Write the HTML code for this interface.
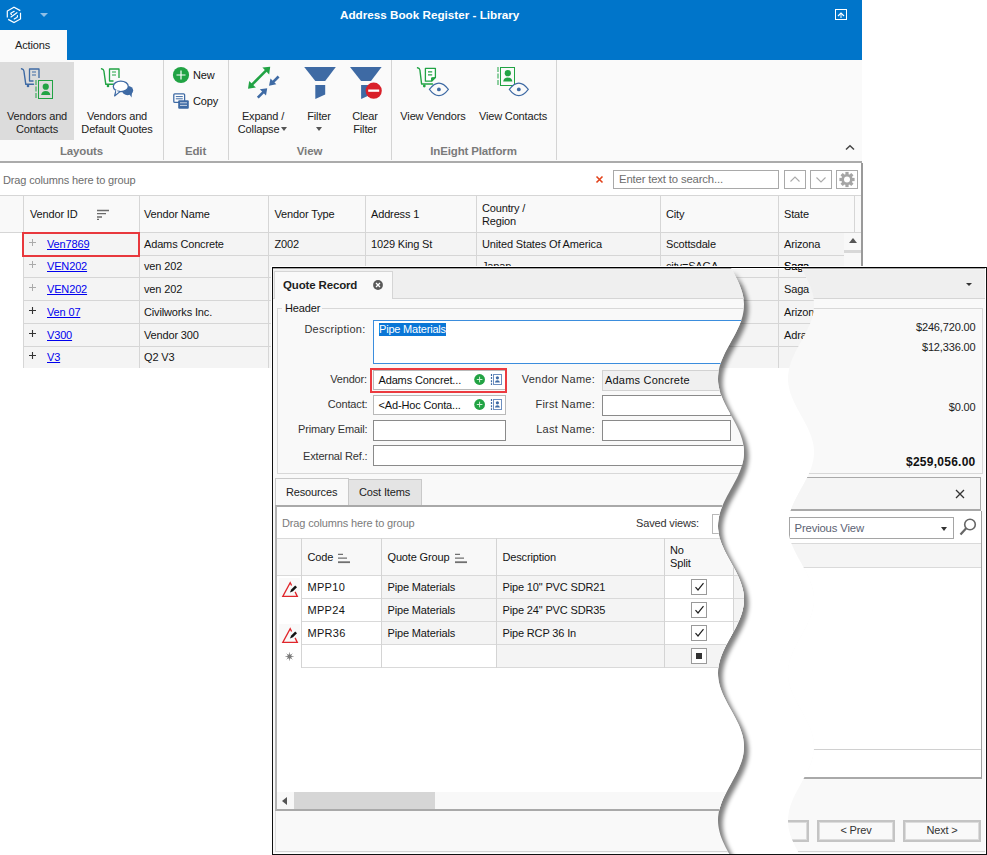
<!DOCTYPE html>
<html><head><meta charset="utf-8">
<style>
*{margin:0;padding:0;box-sizing:border-box}
html,body{width:987px;height:855px;overflow:hidden;background:#fff}
body{position:relative;font-family:"Liberation Sans",sans-serif;font-size:11px;color:#141414;letter-spacing:-0.15px}
.a{position:absolute}
.t{position:absolute;white-space:nowrap;line-height:13px}
#title{left:0;top:0;width:862px;height:60px;background:#0075ca}
#ribbon{left:0;top:60px;width:862px;height:102px;background:#fafafa}
.sep{position:absolute;top:60px;width:1px;height:100px;background:#d4d4d4}
.grp{position:absolute;top:144px;font-weight:bold;color:#7a7a7a;font-size:11.5px;text-align:center;line-height:14px}
.lbl{position:absolute;text-align:center;line-height:13px;color:#222;white-space:nowrap}
.hline{position:absolute;height:1px;background:#d6d6d6}
.vline{position:absolute;width:1px;background:#d6d6d6}
.lnk{color:#0000ee;text-decoration:underline}
.tri{width:0;height:0;border-left:3.5px solid transparent;border-right:3.5px solid transparent;border-top:4px solid #555}
</style></head><body>

<!-- ===== MAIN WINDOW ===== -->
<div class="a" id="title"></div>
<svg class="a" style="left:0;top:0" width="30" height="30" viewBox="0 0 30 30">
 <path d="M20.3,10.6 L14,7.2 L7.3,11 V17.6 M8.2,19.4 L14,22.6 L20.5,19 V12.8" fill="none" stroke="#fff" stroke-width="1.2"/>
 <path d="M14.2,11.3 L10.9,13.1 Q10.4,14 11.4,14.6 M11,16.9 L16.9,12.7 M17.4,15.6 Q17.8,17 16.8,17.6 L14.2,19" fill="none" stroke="#fff" stroke-width="1.2" stroke-linecap="round"/>
</svg>
<div class="a" style="left:40px;top:13px;width:0;height:0;border-left:4px solid transparent;border-right:4px solid transparent;border-top:4px solid #8fbfe6"></div>
<div class="t" style="left:340px;top:8px;color:#fff;font-weight:bold;font-size:11.7px;letter-spacing:0">Address Book Register - Library</div>
<svg class="a" style="left:835px;top:9px" width="12" height="11" viewBox="0 0 12 11"><rect x="0.5" y="0.5" width="11" height="10" fill="none" stroke="#fff"/><path d="M3,7 L6,4 L9,7" fill="none" stroke="#fff" stroke-width="1.2"/><line x1="6" y1="4" x2="6" y2="9" stroke="#fff"/></svg>

<!-- Actions tab -->
<div class="a" style="left:0;top:30px;width:67px;height:32px;background:#fafafa"></div>
<div class="t" style="left:15px;top:39px;color:#222">Actions</div>

<div class="a" id="ribbon"></div>
<div class="a" style="left:0;top:62px;width:74px;height:78px;background:#dcdcdc"></div>
<div class="a" style="left:0;top:161px;width:862px;height:2px;background:#ababab"></div>
<div class="sep" style="left:163px"></div>
<div class="sep" style="left:228px"></div>
<div class="sep" style="left:391px"></div>
<div class="sep" style="left:556px"></div>

<svg class="a" style="left:0;top:0" width="862" height="110" viewBox="0 0 862 110"><path d="M21.5,68.8 Q23.6,69.2 23.9,71 L25.8,84.3 L33.5,84.3" fill="none" stroke="#3e6aa4" stroke-width="1.4" stroke-linecap="round" stroke-linejoin="round"/><circle cx="28" cy="86" r="1.3" fill="#3e6aa4"/><path d="M39,78 L39,69 L29.5,69 L29.5,81 L33.5,81" fill="none" stroke="#3e6aa4" stroke-width="1.3" stroke-linejoin="round"/><path d="M32,72 H36 M32,75 H36" stroke="#3e6aa4" stroke-width="1.2"/><rect x="37" y="79" width="17" height="21" fill="#dcdcdc"/><rect x="38.5" y="80.5" width="14" height="18" fill="none" stroke="#21a344" stroke-width="1"/><path d="M36,80 V99" stroke="#21a344" stroke-width="1" stroke-dasharray="5,1.5"/><circle cx="45.75" cy="86.7" r="3.1" fill="#21a344"/><path d="M41.15,95.0 Q41.75,91.0 45.75,90.9 Q49.75,91.0 50.35,95.0 Z" fill="#21a344"/><path d="M101.5,68.8 Q103.6,69.2 103.9,71 L105.8,84.3 L113.5,84.3" fill="none" stroke="#21a344" stroke-width="1.4" stroke-linecap="round" stroke-linejoin="round"/><circle cx="108" cy="86" r="1.3" fill="#21a344"/><path d="M119,78 L119,69 L109.5,69 L109.5,81 L113.5,81" fill="none" stroke="#21a344" stroke-width="1.3" stroke-linejoin="round"/><path d="M112,72 H116 M112,75 H116" stroke="#21a344" stroke-width="1.2"/><ellipse cx="127.6" cy="90.6" rx="5.6" ry="4.6" fill="#3e6aa4"/><path d="M128.5,93 L131.6,97.6 L132,91" fill="#3e6aa4"/><path d="M116,90.3 L114.6,96 L120,91.6" fill="#fff" stroke="#3e6aa4" stroke-width="1.2" stroke-linejoin="round"/><ellipse cx="120.8" cy="86.4" rx="7.5" ry="5.3" fill="#fff" stroke="#3e6aa4" stroke-width="1.3"/><path d="M115.6,89.8 L116.2,92 L119.2,91.2 Z" fill="#fff"/><circle cx="181" cy="75" r="8.1" fill="#21a344"/><path d="M176.5,75 H185.5 M181,70.5 V79.5" stroke="#fff" stroke-width="1.2"/><rect x="173.8" y="93.8" width="10.8" height="8.6" rx="1" fill="#fff" stroke="#3e6aa4" stroke-width="1.3"/><path d="M175.8,96.6 H182.8 M175.8,98.8 H182.8" stroke="#3e6aa4" stroke-width="1"/><rect x="178.2" y="100.3" width="10.6" height="8.5" rx="1" fill="#3e6aa4"/><path d="M180,102.8 H187 M180,105.4 H187" stroke="#c9d4e4" stroke-width="1"/><path d="M251.5,85.2 L266.5,70.2" stroke="#21a344" stroke-width="2.6"/><polygon points="248,88.8 249.2,81 255.8,87.6" fill="#21a344"/><polygon points="270.2,66.8 262.4,67.6 269.2,74.4" fill="#21a344"/><path d="M278.6,76.5 L272.5,82.6" stroke="#3e6aa4" stroke-width="2.6"/><polygon points="269,85.8 270.5,78.5 276.3,84.3" fill="#3e6aa4"/><path d="M257.8,97.6 L263.8,91.6" stroke="#3e6aa4" stroke-width="2.6"/><polygon points="267.2,88.2 259.8,89.3 266,95.5" fill="#3e6aa4"/><polygon points="304.2,67 335.8,67 325.2,81 315.3,81" fill="#3e6aa4"/><polygon points="315.3,85 325.2,85 325.2,94.4 315.3,98.9" fill="#3e6aa4"/><polygon points="350.0,67 381.6,67 371.0,81 361.1,81" fill="#3e6aa4"/><polygon points="361.1,85 371.0,85 371.0,94.4 361.1,98.9" fill="#3e6aa4"/><circle cx="373.7" cy="90.7" r="8.1" fill="#d9202a"/><rect x="368.2" y="89.5" width="11" height="2.3" fill="#fff"/><path d="M417.5,67.8 Q419.6,68.2 419.9,70 L421.6,84 L432.5,84" fill="none" stroke="#21a344" stroke-width="1.4" stroke-linecap="round" stroke-linejoin="round"/><circle cx="424.3" cy="86" r="1.4" fill="#21a344"/><path d="M425.4,68.4 H435.4 V77.6 L431.6,81.2 H425.4 Z" fill="#fff" stroke="#21a344" stroke-width="1.3" stroke-linejoin="round"/><path d="M431.4,81.2 L431.6,77.8 L435.4,77.6" fill="#21a344" stroke="#21a344" stroke-width="1"/><path d="M428,71.8 H432.2 M428,74.9 H432.2" stroke="#21a344" stroke-width="1.3"/><path d="M429.4,89.4 Q438.9,76.9 448.4,89.4 Q438.9,101.9 429.4,89.4 Z" fill="#fafafa" stroke="#3e6aa4" stroke-width="1.1"/><circle cx="438.9" cy="89.4" r="1.9" fill="#3e6aa4"/><rect x="500.5" y="67.5" width="14" height="18" fill="none" stroke="#21a344" stroke-width="1"/><path d="M498,67 V86" stroke="#21a344" stroke-width="1" stroke-dasharray="5,1.5"/><circle cx="507.8" cy="73.2" r="3.1" fill="#21a344"/><path d="M503.2,81.5 Q503.8,77.5 507.8,77.4 Q511.8,77.5 512.4,81.5 Z" fill="#21a344"/><path d="M509.29999999999995,89.4 Q518.8,76.9 528.3,89.4 Q518.8,101.9 509.29999999999995,89.4 Z" fill="#fafafa" stroke="#3e6aa4" stroke-width="1.1"/><circle cx="518.8" cy="89.4" r="1.9" fill="#3e6aa4"/></svg>
<div class="lbl" style="left:0;top:110px;width:74px">Vendors and<br>Contacts</div>
<div class="lbl" style="left:74px;top:110px;width:86px">Vendors and<br>Default Quotes</div>
<div class="t" style="left:193px;top:69px">New</div>
<div class="t" style="left:193px;top:95px">Copy</div>
<div class="lbl" style="left:228px;top:110px;width:70px">Expand /<br>Collapse &nbsp;&nbsp;</div><div class="a tri" style="left:281px;top:127px"></div>
<div class="lbl" style="left:298px;top:110px;width:42px">Filter</div><div class="a tri" style="left:316px;top:127px"></div>
<div class="lbl" style="left:343px;top:110px;width:44px">Clear<br>Filter</div>
<div class="lbl" style="left:394px;top:110px;width:78px">View Vendors</div>
<div class="lbl" style="left:474px;top:110px;width:78px">View Contacts</div>

<div class="grp" style="left:0;width:163px">Layouts</div>
<div class="grp" style="left:163px;width:65px">Edit</div>
<div class="grp" style="left:228px;width:163px">View</div>
<div class="grp" style="left:391px;width:165px">InEight Platform</div>
<svg class="a" style="left:845px;top:144px" width="10" height="7" viewBox="0 0 10 7"><path d="M1,5.5 L5,1.8 L9,5.5" fill="none" stroke="#444" stroke-width="1.5"/></svg>

<!-- group bar -->
<div class="t" style="left:3px;top:174px;color:#6d6d6d">Drag columns here to group</div>
<svg class="a" style="left:595px;top:175px" width="9" height="9" viewBox="0 0 9 9"><path d="M1.5,1.5 L7.5,7.5 M7.5,1.5 L1.5,7.5" stroke="#e2431c" stroke-width="1.6"/></svg>
<div class="a" style="left:613px;top:170px;width:166px;height:19px;border:1px solid #a9a9a9;background:#fff"></div>
<div class="t" style="left:619px;top:173px;color:#6d6d6d;font-size:11.3px">Enter text to search...</div>
<div class="a" style="left:784px;top:170px;width:22px;height:19px;border:1px solid #a9a9a9;background:#fff"></div>
<div class="a" style="left:810px;top:170px;width:22px;height:19px;border:1px solid #a9a9a9;background:#fff"></div>
<div class="a" style="left:836px;top:170px;width:22px;height:19px;border:1px solid #a9a9a9;background:#fff"></div>
<svg class="a" style="left:784px;top:170px" width="74" height="19" viewBox="0 0 74 19">
<path d="M6.5,11.5 L11,7 L15.5,11.5" fill="none" stroke="#aaa" stroke-width="1.1"/>
<path d="M32.5,7.5 L37,12 L41.5,7.5" fill="none" stroke="#aaa" stroke-width="1.1"/>
<g transform="translate(63,9.5)" fill="#a5a5a5"><circle r="5.6"/>
<g id="teeth"><rect x="-1.6" y="-7.6" width="3.2" height="3"/><rect x="-1.6" y="4.6" width="3.2" height="3"/><rect x="-7.6" y="-1.6" width="3" height="3.2"/><rect x="4.6" y="-1.6" width="3" height="3.2"/></g>
<g transform="rotate(45)"><rect x="-1.6" y="-7.6" width="3.2" height="3"/><rect x="-1.6" y="4.6" width="3.2" height="3"/><rect x="-7.6" y="-1.6" width="3" height="3.2"/><rect x="4.6" y="-1.6" width="3" height="3.2"/></g>
<circle r="3" fill="#fff"/></g></svg>

<!-- grid -->
<div class="a" style="left:0;top:195px;width:862px;height:38px;background:#f9f9f9"></div>
<div class="a" style="left:24px;top:233px;width:838px;height:135px;background:#f4f4f4"></div>
<div class="hline" style="left:0;top:195px;width:862px"></div>
<div class="hline" style="left:0;top:232px;width:862px"></div>
<div class="hline" style="left:24px;top:255px;width:838px"></div>
<div class="hline" style="left:24px;top:277px;width:838px"></div>
<div class="hline" style="left:24px;top:300px;width:838px"></div>
<div class="hline" style="left:24px;top:323px;width:838px"></div>
<div class="hline" style="left:24px;top:346px;width:838px"></div>
<div class="vline" style="left:23px;top:195px;height:173px"></div>
<div class="vline" style="left:139px;top:195px;height:173px"></div>
<div class="vline" style="left:268px;top:195px;height:173px"></div>
<div class="vline" style="left:365px;top:195px;height:173px"></div>
<div class="vline" style="left:476px;top:195px;height:173px"></div>
<div class="vline" style="left:660px;top:195px;height:173px"></div>
<div class="vline" style="left:778px;top:195px;height:173px"></div>
<div class="vline" style="left:854px;top:195px;height:38px"></div>

<div class="t" style="left:30px;top:208px">Vendor ID</div><svg class="a" style="left:96px;top:209px" width="14" height="12" viewBox="0 0 14 12"><path d="M1,1.5 H13 M1,4.7 H10 M1,8 H6 M1,10.4 H3" stroke="#6b6b6b" stroke-width="1.3"/></svg>
<div class="t" style="left:144px;top:208px">Vendor Name</div>
<div class="t" style="left:274.5px;top:208px">Vendor Type</div>
<div class="t" style="left:371px;top:208px">Address 1</div>
<div class="t" style="left:482px;top:202px">Country /<br>Region</div>
<div class="t" style="left:666px;top:208px">City</div>
<div class="t" style="left:784px;top:208px">State</div>

<svg class="a" style="left:28px;top:238px" width="9" height="9" viewBox="0 0 9 9"><path d="M4.5,1 V8 M1,4.5 H8" stroke="#aaa" stroke-width="1"/></svg><div class="t lnk" style="left:47px;top:238px">Ven7869</div>
<svg class="a" style="left:28px;top:260px" width="9" height="9" viewBox="0 0 9 9"><path d="M4.5,1 V8 M1,4.5 H8" stroke="#aaa" stroke-width="1"/></svg><div class="t lnk" style="left:47px;top:260px">VEN202</div>
<svg class="a" style="left:28px;top:283px" width="9" height="9" viewBox="0 0 9 9"><path d="M4.5,1 V8 M1,4.5 H8" stroke="#aaa" stroke-width="1"/></svg><div class="t lnk" style="left:47px;top:283px">VEN202</div>
<svg class="a" style="left:28px;top:306px" width="9" height="9" viewBox="0 0 9 9"><path d="M4.5,1 V8 M1,4.5 H8" stroke="#333" stroke-width="1.1"/></svg><div class="t lnk" style="left:47px;top:306px">Ven 07</div>
<svg class="a" style="left:28px;top:329px" width="9" height="9" viewBox="0 0 9 9"><path d="M4.5,1 V8 M1,4.5 H8" stroke="#333" stroke-width="1.1"/></svg><div class="t lnk" style="left:47px;top:329px">V300</div>
<svg class="a" style="left:28px;top:351px" width="9" height="9" viewBox="0 0 9 9"><path d="M4.5,1 V8 M1,4.5 H8" stroke="#333" stroke-width="1.1"/></svg><div class="t lnk" style="left:47px;top:351px">V3</div>

<div class="t" style="left:144px;top:238px">Adams Concrete</div>
<div class="t" style="left:144px;top:260px">ven 202</div>
<div class="t" style="left:144px;top:283px">ven 202</div>
<div class="t" style="left:144px;top:306px">Civilworks Inc.</div>
<div class="t" style="left:144px;top:329px">Vendor 300</div>
<div class="t" style="left:144px;top:351px">Q2 V3</div>
<div class="t" style="left:274.5px;top:238px">Z002</div>
<div class="t" style="left:371px;top:238px">1029 King St</div>
<div class="t" style="left:482px;top:238px">United States Of America</div>
<div class="t" style="left:666px;top:238px">Scottsdale</div>
<div class="t" style="left:784px;top:238px">Arizona</div>

<div class="t" style="left:482px;top:260px">Japan</div>
<div class="t" style="left:666px;top:260px">city=SAGA</div>
<div class="t" style="left:784px;top:260px">Saga</div>
<div class="t" style="left:784px;top:283px">Saga</div>
<div class="t" style="left:784px;top:306px">Arizona</div>
<div class="t" style="left:784px;top:329px">Adrar</div>
<div class="a" style="left:844px;top:233px;width:18px;height:135px;background:#f8f8f8"></div>
<div class="a" style="left:849px;top:238px;width:0;height:0;border-left:4px solid transparent;border-right:4px solid transparent;border-bottom:5px solid #555"></div>
<div class="a" style="left:844px;top:250px;width:18px;height:3px;background:#d8d8d8"></div>
<div class="a" style="left:861px;top:163px;width:2px;height:105px;background:#9a9a9a"></div>
<div class="a" style="left:22px;top:232px;width:118px;height:25px;border:2px solid #e8383d"></div>

<svg class="a" style="left:0;top:0" width="987" height="855" viewBox="0 0 987 855">
<defs><filter id="sh" x="-10%" y="-10%" width="120%" height="120%"><feGaussianBlur stdDeviation="2.2"/></filter>
<clipPath id="shc"><rect x="600" y="268" width="300" height="586"/></clipPath><linearGradient id="shg" x1="0" y1="0" x2="0" y2="1"><stop offset="0" stop-color="#fff" stop-opacity="0"/><stop offset="1" stop-color="#fff" stop-opacity="1"/></linearGradient><mask id="shm" maskUnits="userSpaceOnUse" x="0" y="0" width="987" height="855"><rect x="600" y="268" width="300" height="18" fill="url(#shg)"/><rect x="600" y="286" width="300" height="570" fill="#fff"/></mask></defs>
<g clip-path="url(#shc)" mask="url(#shm)"><path d="M272.0,268.0 L731.0,268.0 L732.7,271.0 L734.3,274.0 L735.9,277.0 L737.4,280.0 L738.8,283.0 L740.0,286.0 L741.1,289.0 L742.1,292.0 L742.9,295.0 L743.5,298.0 L743.8,301.0 L744.0,304.0 L743.9,307.0 L743.7,310.0 L743.2,313.0 L742.6,316.0 L741.7,319.0 L740.7,322.0 L739.5,325.0 L738.1,328.0 L736.7,331.0 L735.2,334.0 L733.6,337.0 L731.9,340.0 L730.3,343.0 L728.6,346.0 L727.0,349.0 L725.4,352.0 L724.0,355.0 L722.7,358.0 L721.4,361.0 L720.4,364.0 L719.5,367.0 L718.8,370.0 L718.4,373.0 L718.1,376.0 L718.0,379.0 L718.1,382.0 L718.5,385.0 L719.1,388.0 L719.8,391.0 L720.7,394.0 L721.9,397.0 L723.1,400.0 L724.5,403.0 L726.0,406.0 L727.5,409.0 L729.2,412.0 L730.8,415.0 L732.5,418.0 L734.1,421.0 L735.7,424.0 L737.2,427.0 L738.6,430.0 L739.9,433.0 L741.0,436.0 L742.0,439.0 L742.8,442.0 L743.4,445.0 L743.8,448.0 L744.0,451.0 L744.0,454.0 L743.7,457.0 L743.3,460.0 L742.6,463.0 L741.8,466.0 L740.8,469.0 L739.6,472.0 L738.3,475.0 L736.9,478.0 L735.3,481.0 L733.7,484.0 L732.1,487.0 L730.4,490.0 L728.8,493.0 L727.1,496.0 L725.6,499.0 L724.1,502.0 L722.8,505.0 L721.6,508.0 L720.5,511.0 L719.6,514.0 L718.9,517.0 L718.4,520.0 L718.1,523.0 L718.0,526.0 L718.1,529.0 L718.5,532.0 L719.0,535.0 L719.7,538.0 L720.6,541.0 L721.7,544.0 L723.0,547.0 L724.3,550.0 L725.8,553.0 L727.4,556.0 L729.0,559.0 L730.7,562.0 L732.3,565.0 L734.0,568.0 L735.6,571.0 L737.1,574.0 L738.5,577.0 L739.8,580.0 L740.9,583.0 L741.9,586.0 L742.7,589.0 L743.4,592.0 L743.8,595.0 L744.0,598.0 L744.0,601.0 L743.8,604.0 L743.3,607.0 L742.7,610.0 L741.9,613.0 L740.9,616.0 L739.7,619.0 L738.4,622.0 L737.0,625.0 L735.5,628.0 L733.9,631.0 L732.2,634.0 L730.6,637.0 L728.9,640.0 L727.3,643.0 L725.7,646.0 L724.3,649.0 L722.9,652.0 L721.7,655.0 L720.6,658.0 L719.7,661.0 L719.0,664.0 L718.4,667.0 L718.1,670.0 L718.0,673.0 L718.1,676.0 L718.4,679.0 L718.9,682.0 L719.6,685.0 L720.5,688.0 L721.6,691.0 L722.8,694.0 L724.2,697.0 L725.7,700.0 L727.2,703.0 L728.8,706.0 L730.5,709.0 L732.2,712.0 L733.8,715.0 L735.4,718.0 L736.9,721.0 L738.4,724.0 L739.7,727.0 L740.8,730.0 L741.8,733.0 L742.7,736.0 L743.3,739.0 L743.7,742.0 L744.0,745.0 L744.0,748.0 L743.8,751.0 L743.4,754.0 L742.8,757.0 L742.0,760.0 L741.0,763.0 L739.8,766.0 L738.6,769.0 L737.1,772.0 L735.6,775.0 L734.0,778.0 L732.4,781.0 L730.8,784.0 L729.1,787.0 L727.5,790.0 L725.9,793.0 L724.4,796.0 L723.0,799.0 L721.8,802.0 L720.7,805.0 L719.8,808.0 L719.0,811.0 L718.5,814.0 L718.1,817.0 L718.0,820.0 L718.1,823.0 L718.4,826.0 L718.9,829.0 L719.6,832.0 L720.4,835.0 L721.5,838.0 L722.7,841.0 L724.1,844.0 L725.5,847.0 L727.1,850.0 L728.7,853.0 L730.3,856.0 L272.0,856.0 Z" transform="translate(4.5,4)" fill="#000" opacity="0.5" filter="url(#sh)"/></g></svg>
<div class="a" style="left:273px;top:268px;width:713px;height:1px;background:#fff"></div>
<div class="t" style="left:784px;top:260px">Saga</div>
<div class="a" style="left:0;top:0;width:987px;height:855px;clip-path:polygon(271.0px 266.0px,731.0px 266.0px,731.0px 268.0px,732.7px 271.0px,734.3px 274.0px,735.9px 277.0px,737.4px 280.0px,738.8px 283.0px,740.0px 286.0px,741.1px 289.0px,742.1px 292.0px,742.9px 295.0px,743.5px 298.0px,743.8px 301.0px,744.0px 304.0px,743.9px 307.0px,743.7px 310.0px,743.2px 313.0px,742.6px 316.0px,741.7px 319.0px,740.7px 322.0px,739.5px 325.0px,738.1px 328.0px,736.7px 331.0px,735.2px 334.0px,733.6px 337.0px,731.9px 340.0px,730.3px 343.0px,728.6px 346.0px,727.0px 349.0px,725.4px 352.0px,724.0px 355.0px,722.7px 358.0px,721.4px 361.0px,720.4px 364.0px,719.5px 367.0px,718.8px 370.0px,718.4px 373.0px,718.1px 376.0px,718.0px 379.0px,718.1px 382.0px,718.5px 385.0px,719.1px 388.0px,719.8px 391.0px,720.7px 394.0px,721.9px 397.0px,723.1px 400.0px,724.5px 403.0px,726.0px 406.0px,727.5px 409.0px,729.2px 412.0px,730.8px 415.0px,732.5px 418.0px,734.1px 421.0px,735.7px 424.0px,737.2px 427.0px,738.6px 430.0px,739.9px 433.0px,741.0px 436.0px,742.0px 439.0px,742.8px 442.0px,743.4px 445.0px,743.8px 448.0px,744.0px 451.0px,744.0px 454.0px,743.7px 457.0px,743.3px 460.0px,742.6px 463.0px,741.8px 466.0px,740.8px 469.0px,739.6px 472.0px,738.3px 475.0px,736.9px 478.0px,735.3px 481.0px,733.7px 484.0px,732.1px 487.0px,730.4px 490.0px,728.8px 493.0px,727.1px 496.0px,725.6px 499.0px,724.1px 502.0px,722.8px 505.0px,721.6px 508.0px,720.5px 511.0px,719.6px 514.0px,718.9px 517.0px,718.4px 520.0px,718.1px 523.0px,718.0px 526.0px,718.1px 529.0px,718.5px 532.0px,719.0px 535.0px,719.7px 538.0px,720.6px 541.0px,721.7px 544.0px,723.0px 547.0px,724.3px 550.0px,725.8px 553.0px,727.4px 556.0px,729.0px 559.0px,730.7px 562.0px,732.3px 565.0px,734.0px 568.0px,735.6px 571.0px,737.1px 574.0px,738.5px 577.0px,739.8px 580.0px,740.9px 583.0px,741.9px 586.0px,742.7px 589.0px,743.4px 592.0px,743.8px 595.0px,744.0px 598.0px,744.0px 601.0px,743.8px 604.0px,743.3px 607.0px,742.7px 610.0px,741.9px 613.0px,740.9px 616.0px,739.7px 619.0px,738.4px 622.0px,737.0px 625.0px,735.5px 628.0px,733.9px 631.0px,732.2px 634.0px,730.6px 637.0px,728.9px 640.0px,727.3px 643.0px,725.7px 646.0px,724.3px 649.0px,722.9px 652.0px,721.7px 655.0px,720.6px 658.0px,719.7px 661.0px,719.0px 664.0px,718.4px 667.0px,718.1px 670.0px,718.0px 673.0px,718.1px 676.0px,718.4px 679.0px,718.9px 682.0px,719.6px 685.0px,720.5px 688.0px,721.6px 691.0px,722.8px 694.0px,724.2px 697.0px,725.7px 700.0px,727.2px 703.0px,728.8px 706.0px,730.5px 709.0px,732.2px 712.0px,733.8px 715.0px,735.4px 718.0px,736.9px 721.0px,738.4px 724.0px,739.7px 727.0px,740.8px 730.0px,741.8px 733.0px,742.7px 736.0px,743.3px 739.0px,743.7px 742.0px,744.0px 745.0px,744.0px 748.0px,743.8px 751.0px,743.4px 754.0px,742.8px 757.0px,742.0px 760.0px,741.0px 763.0px,739.8px 766.0px,738.6px 769.0px,737.1px 772.0px,735.6px 775.0px,734.0px 778.0px,732.4px 781.0px,730.8px 784.0px,729.1px 787.0px,727.5px 790.0px,725.9px 793.0px,724.4px 796.0px,723.0px 799.0px,721.8px 802.0px,720.7px 805.0px,719.8px 808.0px,719.0px 811.0px,718.5px 814.0px,718.1px 817.0px,718.0px 820.0px,718.1px 823.0px,718.4px 826.0px,718.9px 829.0px,719.6px 832.0px,720.4px 835.0px,721.5px 838.0px,722.7px 841.0px,724.1px 844.0px,725.5px 847.0px,727.1px 850.0px,728.7px 853.0px,730.3px 856.0px,271.0px 856.0px)"><div class="a" style="left:272px;top:267px;width:715px;height:588px;background:#f9f9f9"></div><div class="a" style="left:273px;top:268px;width:714px;height:1px;background:#a6a6a6"></div><div class="a" style="left:273px;top:269px;width:714px;height:1px;background:#f4f4f4"></div><div class="a" style="left:273px;top:270px;width:714px;height:29px;background:#efefef;border-bottom:1px solid #d5d5d5"></div><div class="a" style="left:274px;top:271px;width:119px;height:28px;background:#f9f9f9;border:1px solid #d5d5d5;border-bottom:none"></div><div class="t" style="left:283px;top:278.5px;font-weight:bold;font-size:11.5px;color:#1e1e1e">Quote Record</div><svg class="a" style="left:372px;top:279px" width="12" height="12" viewBox="0 0 12 12"><circle cx="6" cy="6" r="4.9" fill="#595959"/><path d="M4,4 L8,8 M8,4 L4,8" stroke="#fff" stroke-width="1.3"/></svg><div class="a" style="left:277px;top:308px;width:710px;height:166px;border:1px solid #d8d8d8;border-right:none"></div><div class="a" style="left:282px;top:303px;width:40px;height:12px;background:#f9f9f9"></div><div class="t" style="left:285px;top:301.5px;">Header</div><div class="t" style="right:621.5px;top:322.5px;color:#333;letter-spacing:0.25px">Description:</div><div class="a" style="left:373px;top:320px;width:614px;height:44px;background:#fff;border:1px solid #3b8ddd"></div><div class="a" style="left:379px;top:323px;width:67px;height:13px;background:#0a76d6"></div><div class="t" style="left:379px;top:323.0px;color:#fff;letter-spacing:-0.2px">Pipe Materials</div><div class="t" style="right:620px;top:372.5px;color:#333">Vendor:</div><div class="t" style="right:619.5px;top:398.0px;color:#333">Contact:</div><div class="t" style="right:619.5px;top:422.5px;color:#333">Primary Email:</div><div class="t" style="right:619.5px;top:450.0px;color:#333">External Ref.:</div><div class="a" style="left:373px;top:370px;width:133px;height:20px;background:#fff;border:1px solid #b9b9b9"></div><div class="a" style="left:373px;top:395px;width:133px;height:20px;background:#fff;border:1px solid #b9b9b9"></div><div class="a" style="left:373px;top:420px;width:133px;height:21px;background:#fff;border:1px solid #8a8a8a"></div><div class="a" style="left:373px;top:445px;width:614px;height:21px;background:#fff;border:1px solid #8a8a8a"></div><div class="a" style="left:370px;top:368px;width:137px;height:25px;border:2px solid #ec3b40"></div><div class="t" style="left:378.5px;top:373.5px;color:#111">Adams Concret...</div><div class="t" style="left:378.5px;top:398.5px;color:#111">&lt;Ad-Hoc Conta...</div><svg class="a" style="left:474px;top:374.0px" width="11" height="11" viewBox="0 0 11 11"><circle cx="5.6" cy="5.5" r="5.4" fill="#22a344"/><path d="M2.8,5.5 H8.4 M5.6,2.7 V8.3" stroke="#d8f2dc" stroke-width="1"/></svg><svg class="a" style="left:490px;top:373.0px" width="13" height="13" viewBox="0 0 13 13"><path d="M1.5,1 V12" stroke="#3e6aa4" stroke-width="1.2" stroke-dasharray="2,1.1"/><rect x="3.5" y="1.5" width="8" height="10" fill="#fff" stroke="#6d8fc0" stroke-width="1"/><circle cx="7.4" cy="4.8" r="1.6" fill="#3e6aa4"/><path d="M4.9,9.6 Q5.2,7.2 7.4,7.2 Q9.6,7.2 9.9,9.6 Z" fill="#3e6aa4"/></svg><svg class="a" style="left:474px;top:399.0px" width="11" height="11" viewBox="0 0 11 11"><circle cx="5.6" cy="5.5" r="5.4" fill="#22a344"/><path d="M2.8,5.5 H8.4 M5.6,2.7 V8.3" stroke="#d8f2dc" stroke-width="1"/></svg><svg class="a" style="left:490px;top:398.0px" width="13" height="13" viewBox="0 0 13 13"><path d="M1.5,1 V12" stroke="#3e6aa4" stroke-width="1.2" stroke-dasharray="2,1.1"/><rect x="3.5" y="1.5" width="8" height="10" fill="#fff" stroke="#6d8fc0" stroke-width="1"/><circle cx="7.4" cy="4.8" r="1.6" fill="#3e6aa4"/><path d="M4.9,9.6 Q5.2,7.2 7.4,7.2 Q9.6,7.2 9.9,9.6 Z" fill="#3e6aa4"/></svg><div class="t" style="right:392px;top:372.5px;color:#333;letter-spacing:0.25px">Vendor Name:</div><div class="t" style="right:392px;top:398.0px;color:#333;letter-spacing:0.25px">First Name:</div><div class="t" style="right:392px;top:422.5px;color:#333;letter-spacing:0.25px">Last Name:</div><div class="a" style="left:602px;top:370px;width:385px;height:21px;background:#f0f0f0;border:1px solid #d2d2d2"></div><div class="t" style="left:605px;top:374.0px;color:#111;letter-spacing:0.2px">Adams Concrete</div><div class="a" style="left:602px;top:395px;width:129px;height:21px;background:#fff;border:1px solid #8a8a8a"></div><div class="a" style="left:602px;top:420px;width:129px;height:21px;background:#fff;border:1px solid #8a8a8a"></div><div class="a" style="left:275px;top:478px;width:74px;height:28px;background:#f9f9f9;border:1px solid #c9c9c9;border-bottom:none"></div><div class="a" style="left:348px;top:479px;width:74px;height:27px;background:#e4e4e4;border:1px solid #c9c9c9;border-bottom:none"></div><div class="t" style="left:286px;top:485.5px;color:#222">Resources</div><div class="t" style="left:359px;top:485.5px;color:#222">Cost Items</div><div class="a" style="left:275px;top:505px;width:712px;height:306px;background:#fff;border-top:2px solid #a9a9a9;border-left:2px solid #b3b3b3;border-bottom:2px solid #a9a9a9"></div><div class="t" style="left:282px;top:516.5px;color:#7b7b7b">Drag columns here to group</div><div class="t" style="right:288px;top:516.5px;color:#333">Saved views:</div><div class="a" style="left:712px;top:514px;width:60px;height:20px;background:#fff;border:1px solid #b9b9b9"></div><div class="a" style="left:277px;top:538px;width:710px;height:38px;background:#f8f8f8;border-top:1px solid #d9d9d9;border-bottom:1px solid #d9d9d9"></div><div class="a" style="left:302px;top:576px;width:80px;height:23px;background:#fff"></div><div class="a" style="left:382px;top:576px;width:115px;height:23px;background:#f4f4f4"></div><div class="a" style="left:497px;top:576px;width:490px;height:23px;background:#f4f4f4"></div><div class="a" style="left:665px;top:576px;width:68px;height:22px;background:#fff"></div><div class="a" style="left:302px;top:599px;width:80px;height:23px;background:#fff"></div><div class="a" style="left:382px;top:599px;width:115px;height:23px;background:#f4f4f4"></div><div class="a" style="left:497px;top:599px;width:490px;height:23px;background:#f4f4f4"></div><div class="a" style="left:665px;top:599px;width:68px;height:22px;background:#fff"></div><div class="a" style="left:302px;top:622px;width:80px;height:23px;background:#fff"></div><div class="a" style="left:382px;top:622px;width:115px;height:23px;background:#f4f4f4"></div><div class="a" style="left:497px;top:622px;width:490px;height:23px;background:#f4f4f4"></div><div class="a" style="left:665px;top:622px;width:68px;height:22px;background:#fff"></div><div class="a" style="left:302px;top:645px;width:80px;height:23px;background:#fff"></div><div class="a" style="left:382px;top:645px;width:115px;height:23px;background:#fff"></div><div class="a" style="left:497px;top:645px;width:490px;height:23px;background:#f4f4f4"></div><div class="a" style="left:302px;top:598px;width:685px;height:1px;background:#d9d9d9"></div><div class="a" style="left:302px;top:621px;width:685px;height:1px;background:#d9d9d9"></div><div class="a" style="left:302px;top:644px;width:685px;height:1px;background:#d9d9d9"></div><div class="a" style="left:302px;top:667px;width:685px;height:1px;background:#d9d9d9"></div><div class="a" style="left:301px;top:538px;width:1px;height:130px;background:#d4d4d4"></div><div class="a" style="left:381px;top:538px;width:1px;height:130px;background:#d4d4d4"></div><div class="a" style="left:496px;top:538px;width:1px;height:130px;background:#d4d4d4"></div><div class="a" style="left:664px;top:538px;width:1px;height:130px;background:#d4d4d4"></div><div class="a" style="left:733px;top:538px;width:1px;height:130px;background:#d4d4d4"></div><div class="t" style="left:307.5px;top:550.5px;">Code</div><div class="t" style="left:387.5px;top:550.5px;">Quote Group</div><div class="t" style="left:502.5px;top:550.5px;">Description</div><div class="t" style="left:670px;top:544.0px;">No</div><div class="t" style="left:670px;top:557.0px;">Split</div><svg class="a" style="left:338px;top:552px" width="13" height="12" viewBox="0 0 13 12"><path d="M0,2.3 H5 M0,6.2 H9" stroke="#707070" stroke-width="1.3"/><path d="M0,10.2 H12" stroke="#707070" stroke-width="1.8"/></svg><svg class="a" style="left:455px;top:552px" width="13" height="12" viewBox="0 0 13 12"><path d="M0,2.3 H5 M0,6.2 H9" stroke="#707070" stroke-width="1.3"/><path d="M0,10.2 H12" stroke="#707070" stroke-width="1.8"/></svg><div class="t" style="left:307.5px;top:580.5px;letter-spacing:0.3px">MPP10</div><div class="t" style="left:387.5px;top:580.5px;">Pipe Materials</div><div class="t" style="left:502.5px;top:580.5px;">Pipe 10&quot; PVC SDR21</div><div class="a" style="left:691px;top:579px;width:16px;height:16px;background:#fff;border:1px solid #9a9a9a"></div><svg class="a" style="left:694px;top:582px" width="11" height="10" viewBox="0 0 11 10"><path d="M1.5,5.2 L4,8 L9.5,1.2" fill="none" stroke="#222" stroke-width="1.2"/></svg><div class="t" style="left:307.5px;top:603.5px;letter-spacing:0.3px">MPP24</div><div class="t" style="left:387.5px;top:603.5px;">Pipe Materials</div><div class="t" style="left:502.5px;top:603.5px;">Pipe 24&quot; PVC SDR35</div><div class="a" style="left:691px;top:602px;width:16px;height:16px;background:#fff;border:1px solid #9a9a9a"></div><svg class="a" style="left:694px;top:605px" width="11" height="10" viewBox="0 0 11 10"><path d="M1.5,5.2 L4,8 L9.5,1.2" fill="none" stroke="#222" stroke-width="1.2"/></svg><div class="t" style="left:307.5px;top:626.5px;letter-spacing:0.3px">MPR36</div><div class="t" style="left:387.5px;top:626.5px;">Pipe Materials</div><div class="t" style="left:502.5px;top:626.5px;">Pipe RCP 36 In</div><div class="a" style="left:691px;top:625px;width:16px;height:16px;background:#fff;border:1px solid #9a9a9a"></div><svg class="a" style="left:694px;top:628px" width="11" height="10" viewBox="0 0 11 10"><path d="M1.5,5.2 L4,8 L9.5,1.2" fill="none" stroke="#222" stroke-width="1.2"/></svg><div class="a" style="left:691px;top:648px;width:16px;height:16px;background:#fff;border:1px solid #9a9a9a"></div><div class="a" style="left:696px;top:653px;width:6px;height:6px;background:#333"></div><div class="a" style="left:279px;top:578px;width:21px;height:19px;background:#f9f9f9"></div><svg class="a" style="left:276px;top:576px" width="30" height="30" viewBox="0 0 30 30"><path d="M15.6,9.6 L14.2,6.6 L6.8,20.4 H21.3 L19.1,15.9" fill="none" stroke="#e0262b" stroke-width="1.3" stroke-linejoin="miter"/><path d="M13.9,16.6 L15.2,13.4 L19.2,9.4 L21,11.2 L17,15.2 Z" fill="#111"/></svg><div class="a" style="left:279px;top:624px;width:21px;height:19px;background:#f9f9f9"></div><svg class="a" style="left:276px;top:622px" width="30" height="30" viewBox="0 0 30 30"><path d="M15.6,9.6 L14.2,6.6 L6.8,20.4 H21.3 L19.1,15.9" fill="none" stroke="#e0262b" stroke-width="1.3" stroke-linejoin="miter"/><path d="M13.9,16.6 L15.2,13.4 L19.2,9.4 L21,11.2 L17,15.2 Z" fill="#111"/></svg><svg class="a" style="left:284.7px;top:651.6px" width="9" height="9" viewBox="0 0 9 9"><path d="M4.5,0.5 V8.5 M0.5,4.5 H8.5 M1.7,1.7 L7.3,7.3 M7.3,1.7 L1.7,7.3" stroke="#999" stroke-width="0.9"/><circle cx="4.5" cy="4.5" r="2.2" fill="#7a7a7a"/></svg><div class="a" style="left:277px;top:792px;width:710px;height:17px;background:#f8f8f8"></div><div class="a" style="left:294px;top:792px;width:141px;height:17px;background:#d6d6d6"></div><div class="a" style="left:282px;top:797px;width:0px;height:0px;border-top:4px solid transparent;border-bottom:4px solid transparent;border-right:5px solid #555"></div><div class="a" style="left:275px;top:811px;width:712px;height:41px;border-left:1px solid #dcdcdc;border-bottom:1px solid #d5d5d5"></div><div class="a" style="left:273px;top:853px;width:714px;height:1px;background:#fff"></div></div>
<div class="a" style="left:0;top:0;width:987px;height:855px;clip-path:polygon(801.0px 268.0px,802.7px 271.0px,804.3px 274.0px,805.9px 277.0px,807.4px 280.0px,808.8px 283.0px,810.0px 286.0px,811.1px 289.0px,812.1px 292.0px,812.9px 295.0px,813.5px 298.0px,813.8px 301.0px,814.0px 304.0px,813.9px 307.0px,813.7px 310.0px,813.2px 313.0px,812.6px 316.0px,811.7px 319.0px,810.7px 322.0px,809.5px 325.0px,808.1px 328.0px,806.7px 331.0px,805.2px 334.0px,803.6px 337.0px,801.9px 340.0px,800.3px 343.0px,798.6px 346.0px,797.0px 349.0px,795.4px 352.0px,794.0px 355.0px,792.7px 358.0px,791.4px 361.0px,790.4px 364.0px,789.5px 367.0px,788.8px 370.0px,788.4px 373.0px,788.1px 376.0px,788.0px 379.0px,788.1px 382.0px,788.5px 385.0px,789.1px 388.0px,789.8px 391.0px,790.7px 394.0px,791.9px 397.0px,793.1px 400.0px,794.5px 403.0px,796.0px 406.0px,797.5px 409.0px,799.2px 412.0px,800.8px 415.0px,802.5px 418.0px,804.1px 421.0px,805.7px 424.0px,807.2px 427.0px,808.6px 430.0px,809.9px 433.0px,811.0px 436.0px,812.0px 439.0px,812.8px 442.0px,813.4px 445.0px,813.8px 448.0px,814.0px 451.0px,814.0px 454.0px,813.7px 457.0px,813.3px 460.0px,812.6px 463.0px,811.8px 466.0px,810.8px 469.0px,809.6px 472.0px,808.3px 475.0px,806.9px 478.0px,805.3px 481.0px,803.7px 484.0px,802.1px 487.0px,800.4px 490.0px,798.8px 493.0px,797.1px 496.0px,795.6px 499.0px,794.1px 502.0px,792.8px 505.0px,791.6px 508.0px,790.5px 511.0px,789.6px 514.0px,788.9px 517.0px,788.4px 520.0px,788.1px 523.0px,788.0px 526.0px,788.1px 529.0px,788.5px 532.0px,789.0px 535.0px,789.7px 538.0px,790.6px 541.0px,791.7px 544.0px,793.0px 547.0px,794.3px 550.0px,795.8px 553.0px,797.4px 556.0px,799.0px 559.0px,800.7px 562.0px,802.3px 565.0px,804.0px 568.0px,805.6px 571.0px,807.1px 574.0px,808.5px 577.0px,809.8px 580.0px,810.9px 583.0px,811.9px 586.0px,812.7px 589.0px,813.4px 592.0px,813.8px 595.0px,814.0px 598.0px,814.0px 601.0px,813.8px 604.0px,813.3px 607.0px,812.7px 610.0px,811.9px 613.0px,810.9px 616.0px,809.7px 619.0px,808.4px 622.0px,807.0px 625.0px,805.5px 628.0px,803.9px 631.0px,802.2px 634.0px,800.6px 637.0px,798.9px 640.0px,797.3px 643.0px,795.7px 646.0px,794.3px 649.0px,792.9px 652.0px,791.7px 655.0px,790.6px 658.0px,789.7px 661.0px,789.0px 664.0px,788.4px 667.0px,788.1px 670.0px,788.0px 673.0px,788.1px 676.0px,788.4px 679.0px,788.9px 682.0px,789.6px 685.0px,790.5px 688.0px,791.6px 691.0px,792.8px 694.0px,794.2px 697.0px,795.7px 700.0px,797.2px 703.0px,798.8px 706.0px,800.5px 709.0px,802.2px 712.0px,803.8px 715.0px,805.4px 718.0px,806.9px 721.0px,808.4px 724.0px,809.7px 727.0px,810.8px 730.0px,811.8px 733.0px,812.7px 736.0px,813.3px 739.0px,813.7px 742.0px,814.0px 745.0px,814.0px 748.0px,813.8px 751.0px,813.4px 754.0px,812.8px 757.0px,812.0px 760.0px,811.0px 763.0px,809.8px 766.0px,808.6px 769.0px,807.1px 772.0px,805.6px 775.0px,804.0px 778.0px,802.4px 781.0px,800.8px 784.0px,799.1px 787.0px,797.5px 790.0px,795.9px 793.0px,794.4px 796.0px,793.0px 799.0px,791.8px 802.0px,790.7px 805.0px,789.8px 808.0px,789.0px 811.0px,788.5px 814.0px,788.1px 817.0px,788.0px 820.0px,788.1px 823.0px,788.4px 826.0px,788.9px 829.0px,789.6px 832.0px,790.4px 835.0px,791.5px 838.0px,792.7px 841.0px,794.1px 844.0px,795.5px 847.0px,797.1px 850.0px,798.7px 853.0px,800.3px 856.0px,988.0px 856.0px,988.0px 266.0px,801.0px 266.0px)"><div class="a" style="left:700px;top:267px;width:287px;height:588px;background:#f9f9f9"></div><div class="a" style="left:700px;top:268px;width:285px;height:1px;background:#a6a6a6"></div><div class="a" style="left:700px;top:269px;width:285px;height:1px;background:#f4f4f4"></div><div class="a" style="left:700px;top:270px;width:285px;height:29px;background:#efefef;border-bottom:1px solid #d5d5d5"></div><div class="a" style="left:985px;top:268px;width:1px;height:586px;background:#fff"></div><div class="a" style="left:966px;top:283px;width:0px;height:0px;border-left:3px solid transparent;border-right:3px solid transparent;border-top:3px solid #333"></div><div class="a" style="left:700px;top:308px;width:283px;height:166px;border:1px solid #d8d8d8;border-left:none"></div><div class="t" style="right:11.5px;top:321.0px;color:#222;letter-spacing:-0.15px">$246,720.00</div><div class="t" style="right:11.5px;top:341.0px;color:#222;letter-spacing:-0.15px">$12,336.00</div><div class="t" style="right:11.5px;top:400.5px;color:#222;letter-spacing:-0.15px">$0.00</div><div class="t" style="right:11.5px;top:455.5px;color:#111;font-weight:bold;font-size:12px;letter-spacing:0.25px">$259,056.00</div><div class="a" style="left:700px;top:477px;width:281px;height:34px;background:#f5f5f5;border-top:1px solid #a9a9a9;border-right:1px solid #a9a9a9;border-bottom:2px solid #a9a9a9"></div><svg class="a" style="left:955px;top:489px" width="10" height="10" viewBox="0 0 10 10"><path d="M1,1 L9,9 M9,1 L1,9" stroke="#333" stroke-width="1.3"/></svg><div class="a" style="left:700px;top:511px;width:282px;height:268px;background:#fff;border-right:1px solid #a0a0a0;border-bottom:2px solid #a9a9a9"></div><div class="a" style="left:789px;top:517px;width:165px;height:22px;background:#fff;border:1px solid #a5a5a5"></div><div class="t" style="left:794.5px;top:521.5px;color:#5c6273;font-size:11.3px">Previous View</div><div class="a" style="left:941px;top:527px;width:0px;height:0px;border-left:3.5px solid transparent;border-right:3.5px solid transparent;border-top:4px solid #333"></div><svg class="a" style="left:958px;top:515px" width="20" height="22" viewBox="0 0 20 22"><circle cx="12" cy="9.5" r="5.3" fill="none" stroke="#666" stroke-width="1.6"/><path d="M8.2,13.3 L2.5,19.5" stroke="#666" stroke-width="2.2"/></svg><div class="a" style="left:700px;top:543px;width:281px;height:25px;background:#f5f5f5;border-top:1px solid #dadada;border-bottom:1px solid #dadada"></div><div class="a" style="left:700px;top:749px;width:281px;height:1px;background:#d0d0d0"></div><div class="a" style="left:731px;top:820px;width:78px;height:22px;background:#f9f9f9;border:2px solid #c4c4c4;box-shadow:inset 0 0 0 1px #dcdcdc"></div><div class="a" style="left:817px;top:820px;width:78px;height:22px;background:#f9f9f9;border:2px solid #c4c4c4;box-shadow:inset 0 0 0 1px #dcdcdc"></div><div class="t" style="left:817px;top:824px;width:78px;text-align:center;color:#333">&lt; Prev</div><div class="a" style="left:903px;top:820px;width:78px;height:22px;background:#f9f9f9;border:2px solid #c4c4c4;box-shadow:inset 0 0 0 1px #dcdcdc"></div><div class="t" style="left:903px;top:824px;width:78px;text-align:center;color:#333">Next &gt;</div><div class="a" style="left:700px;top:851px;width:285px;height:1px;background:#d5d5d5"></div><div class="a" style="left:700px;top:853px;width:285px;height:1px;background:#fff"></div></div>
<div class="a" style="left:271px;top:266px;width:716px;height:1px;background:#fff"></div>
<div class="a" style="left:271px;top:266px;width:1px;height:589px;background:#fff"></div>
<div class="a" style="left:272px;top:267px;width:715px;height:1px;background:#000"></div>
<div class="a" style="left:272px;top:854px;width:715px;height:1px;background:#111"></div>
<div class="a" style="left:272px;top:267px;width:1px;height:588px;background:#111"></div>
<div class="a" style="left:986px;top:267px;width:1px;height:588px;background:#111"></div>
</body></html>
